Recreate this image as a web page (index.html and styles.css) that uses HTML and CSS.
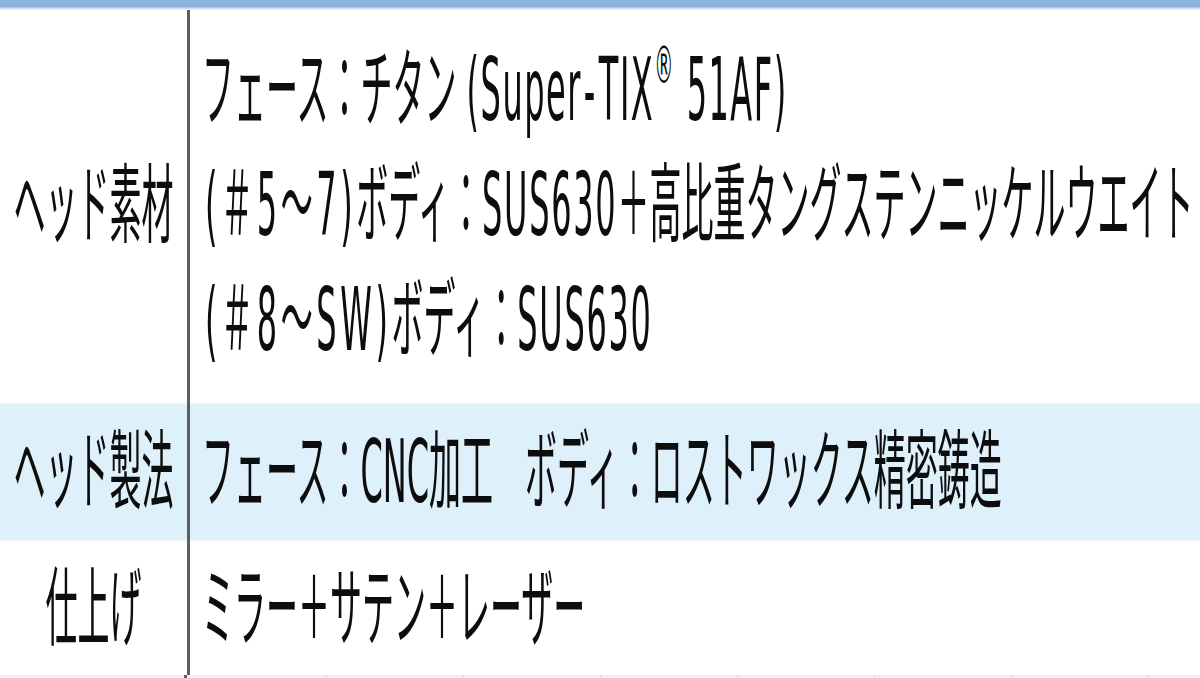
FILE: index.html
```html
<!DOCTYPE html>
<html lang="ja">
<head>
<meta charset="utf-8">
<title>ヘッド仕様</title>
<link rel="stylesheet" href="styles.css">
</head>
<body>
<div class="page">
  <div class="topbar"></div>
  <div class="spec">
    <div class="row r1">
      <div class="th"><span class="s">ヘッド素材</span></div>
      <div class="td multi">
        <div class="ln"><span class="s">フェース：チタン <span class="lat">(Super<span class="hy">-</span>TIX<sup>®</sup> 51AF)</span></span></div>
        <div class="ln"><span class="s"><span class="grp"><span class="po">(</span>＃5～7)</span>ボディ：<span class="code">SUS630</span>＋高比重タングステンニッケルウエイト</span></div>
        <div class="ln"><span class="s"><span class="grp"><span class="po">(</span>＃8～SW)</span>ボディ：<span class="code">SUS630</span></span></div>
      </div>
    </div>
    <div class="row r2">
      <div class="th"><span class="s">ヘッド製法</span></div>
      <div class="td"><span class="s">フェース：CNC加工　ボディ：ロストワックス精密鋳造</span></div>
    </div>
    <div class="row r3">
      <div class="th"><span class="s">仕上げ</span></div>
      <div class="td"><span class="s">ミラー＋サテン＋レーザー</span></div>
    </div>
  </div>
  <div class="bottom">
    <div class="bcell first"></div>
    <div class="bcell"></div>
    <div class="bcell"></div>
    <div class="bcell"></div>
    <div class="bcell"></div>
    <div class="bcell"></div>
    <div class="bcell"></div>
    <div class="bcell"></div>
  </div>
</div>
</body>
</html>
```

FILE: styles.css
```css
html, body {
  margin: 0;
  padding: 0;
  background: #ffffff;
}
.page {
  width: 1200px;
  height: 678px;
  overflow: hidden;
  font-family: "DejaVu Sans", "Noto Sans CJK JP", sans-serif;
  font-size: 32px;
  color: #0d0d0d;
  display: flex;
  flex-direction: column;
}
.topbar {
  height: 10px;
  flex: none;
  background: linear-gradient(#8eb2df 0, #8eb2df 65%, #ffffff 100%);
}
.spec {
  display: flex;
  flex-direction: column;
  flex: none;
}
.row {
  display: grid;
  grid-template-columns: 187px 1fr;
}
.r1 { height: 392px; }
.r2 {
  height: 140px;
  background: linear-gradient(#ffffff 0, #def0fa 3px, #def0fa calc(100% - 3px), #ffffff 100%);
}
.r3 { height: 133px; }
.th {
  display: flex;
  align-items: center;
  justify-content: center;
}
.td {
  border-left: 3px solid #5f5f5f;
  padding-left: 12px;
  display: flex;
  align-items: center;
}
.td.multi {
  flex-direction: column;
  align-items: flex-start;
  justify-content: flex-start;
  padding-top: 22px;
}
.ln {
  height: 115px;
  display: flex;
  align-items: center;
}
.s {
  display: inline-block;
  line-height: 1;
  white-space: nowrap;
  transform: scaleY(2.7);
  transform-origin: 50% 50%;
}
.s sup {
  font-size: 0.6em;
  line-height: 0;
  vertical-align: 0.7em;
}
.lat {
  letter-spacing: 1.5px;
}
.hy {
  padding: 0 2px;
}
.grp {
  letter-spacing: 3.6px;
}
.po {
  padding-left: 3px;
}
.code {
  letter-spacing: 1.7px;
}
.bottom {
  flex: 1;
  display: grid;
  grid-template-columns: 187px 140px repeat(6, 137px) 1fr;
  background: #f0f0f0;
}
.bcell {
  border-right: 1px solid #dcdcdc;
}
.bcell.first {
  border-right: 3px solid #5f5f5f;
}
```
